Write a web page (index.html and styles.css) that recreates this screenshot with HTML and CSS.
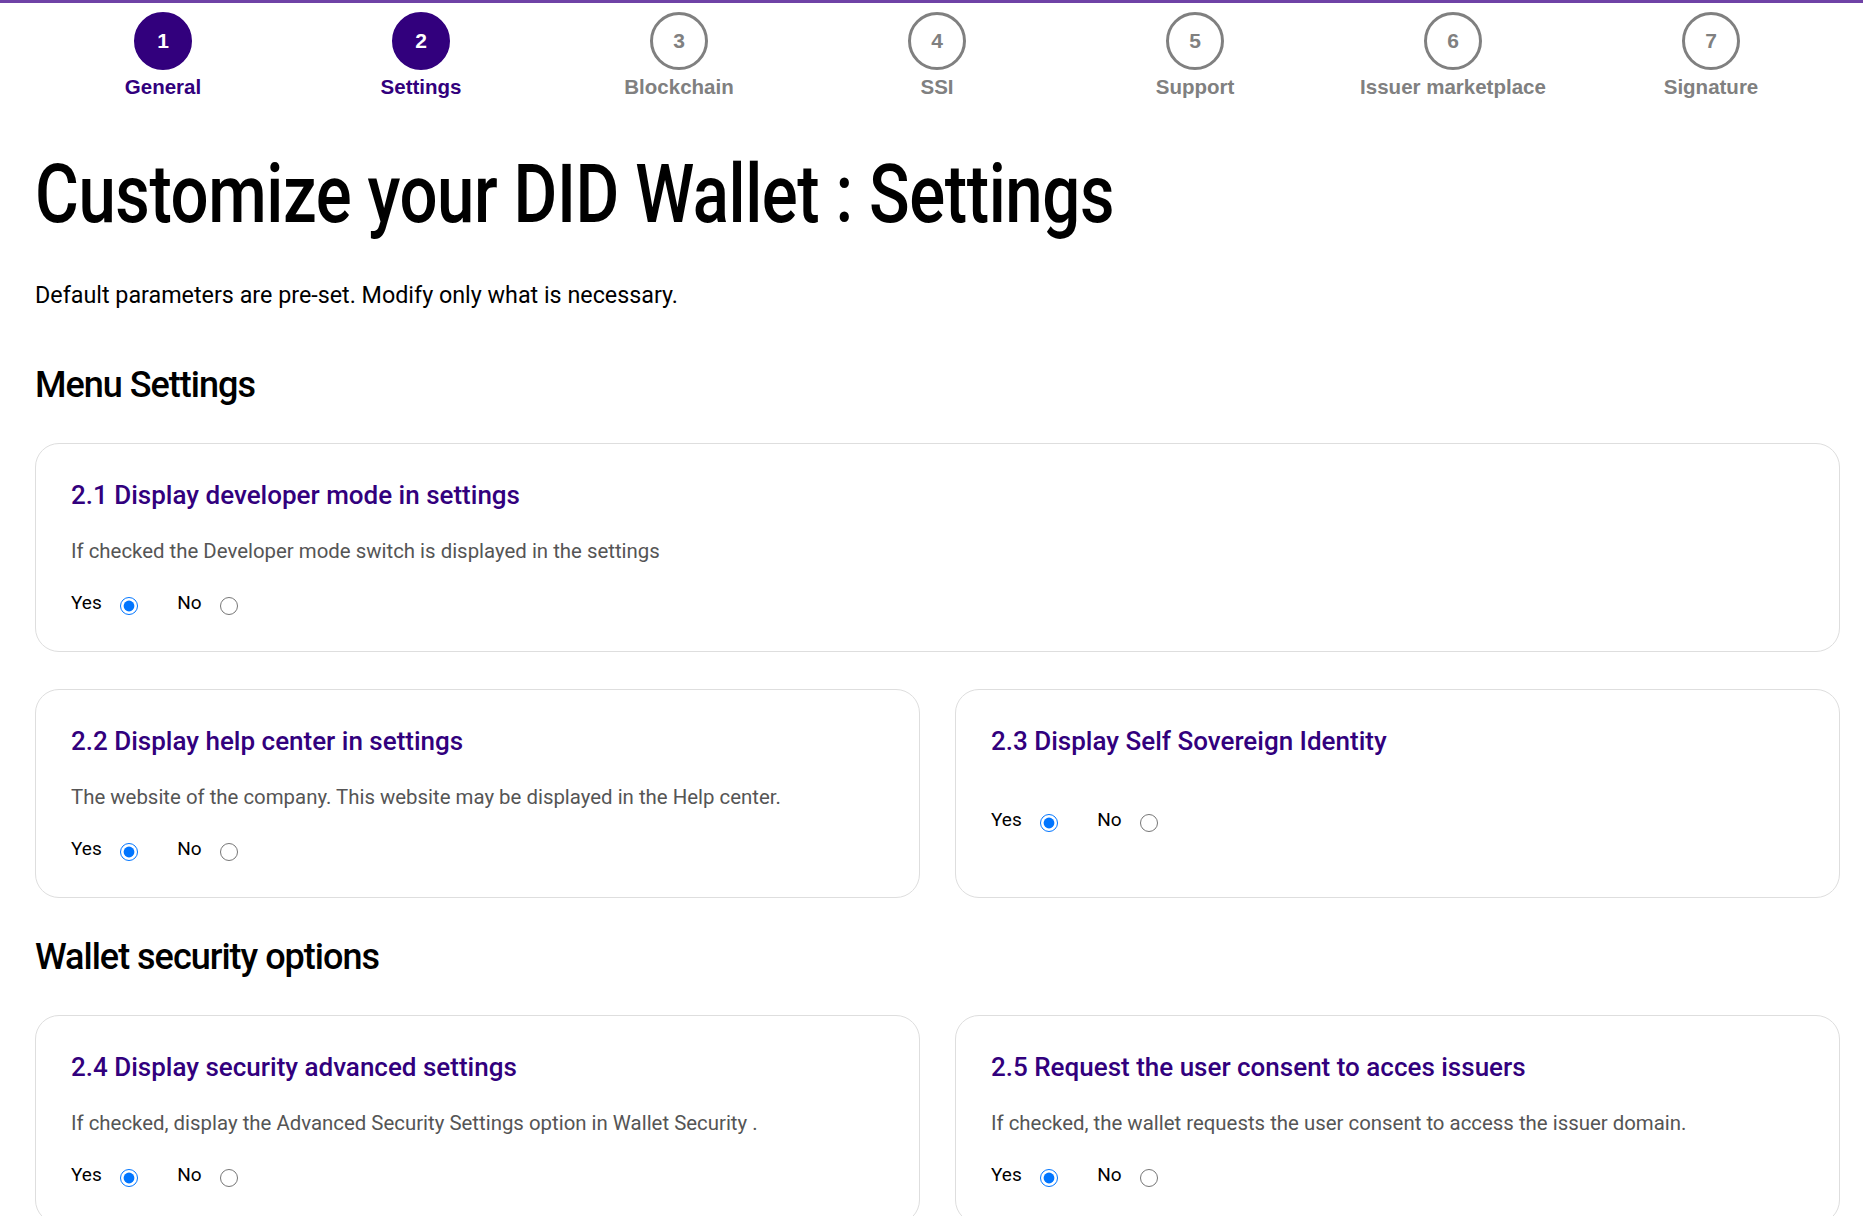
FILE: index.html
```html
<!DOCTYPE html>
<html lang="en">
<head>
<meta charset="utf-8">
<title>Customize your DID Wallet : Settings</title>
<link rel="stylesheet" href="styles.css">
</head>
<body>
<div class="topbar"></div>
<div class="page">
  <ol class="stepper">
    <li class="step done"><span class="dot">1</span><span class="label">General</span></li>
    <li class="step done"><span class="dot">2</span><span class="label">Settings</span></li>
    <li class="step"><span class="dot">3</span><span class="label">Blockchain</span></li>
    <li class="step"><span class="dot">4</span><span class="label">SSI</span></li>
    <li class="step"><span class="dot">5</span><span class="label">Support</span></li>
    <li class="step"><span class="dot">6</span><span class="label">Issuer marketplace</span></li>
    <li class="step"><span class="dot">7</span><span class="label">Signature</span></li>
  </ol>

  <h1 class="title"><span class="title-text">Customize your DID Wallet : Settings</span></h1>
  <p class="lead">Default parameters are pre-set. Modify only what is necessary.</p>

  <h2 class="section">Menu Settings</h2>

  <div class="card">
    <h3 class="card-title">2.1 Display developer mode in settings</h3>
    <p class="card-desc">If checked the Developer mode switch is displayed in the settings</p>
    <div class="choices">
      <label class="opt">Yes<input type="radio" name="q21" checked></label>
      <label class="opt">No<input type="radio" name="q21"></label>
    </div>
  </div>

  <div class="grid">
    <div class="card">
      <h3 class="card-title">2.2 Display help center in settings</h3>
      <p class="card-desc">The website of the company. This website may be displayed in the Help center.</p>
      <div class="choices">
        <label class="opt">Yes<input type="radio" name="q22" checked></label>
        <label class="opt">No<input type="radio" name="q22"></label>
      </div>
    </div>
    <div class="card">
      <h3 class="card-title">2.3 Display Self Sovereign Identity</h3>
      <div class="choices nodesc">
        <label class="opt">Yes<input type="radio" name="q23" checked></label>
        <label class="opt">No<input type="radio" name="q23"></label>
      </div>
    </div>
  </div>

  <h2 class="section second">Wallet security options</h2>

  <div class="grid">
    <div class="card">
      <h3 class="card-title">2.4 Display security advanced settings</h3>
      <p class="card-desc">If checked, display the Advanced Security Settings option in Wallet Security .</p>
      <div class="choices">
        <label class="opt">Yes<input type="radio" name="q24" checked></label>
        <label class="opt">No<input type="radio" name="q24"></label>
      </div>
    </div>
    <div class="card">
      <h3 class="card-title">2.5 Request the user consent to acces issuers</h3>
      <p class="card-desc">If checked, the wallet requests the user consent to access the issuer domain.</p>
      <div class="choices">
        <label class="opt">Yes<input type="radio" name="q25" checked></label>
        <label class="opt">No<input type="radio" name="q25"></label>
      </div>
    </div>
  </div>
</div>
</body>
</html>
```
FILE: styles.css
```css
* { box-sizing: border-box; }
html, body { margin: 0; padding: 0; background: #fff; }
body {
  font-family: Roboto, "Liberation Sans", Arial, sans-serif;
  color: #000;
  overflow: hidden;
}
.topbar { height: 3px; background: #6f42a6; }
.page { padding: 0 23px 0 35px; }

.stepper {
  list-style: none;
  margin: 0 0 0 -1px;
  padding: 9px 0 0;
  display: grid;
  grid-template-columns: repeat(7, 1fr);
}
.step { display: flex; flex-direction: column; align-items: center; }
.dot {
  width: 58px; height: 58px;
  border-radius: 50%;
  border: 3px solid #808080;
  display: flex; align-items: center; justify-content: center;
  font-family: "Liberation Sans", Arial, sans-serif;
  font-weight: 700; font-size: 21px;
  color: #808080;
}
.label {
  margin-top: 5px;
  font-family: "Liberation Sans", Arial, sans-serif;
  font-weight: 700; font-size: 20.5px; line-height: 24px;
  color: #808080;
  white-space: nowrap;
}
.step.done .dot { background: #32007d; border-color: #32007d; color: #fff; }
.step.done .label { color: #32007d; }

.title {
  margin: 47px 0 0;
  font-size: 82px; font-weight: 500; line-height: 96px;
  white-space: nowrap;
}
.title-text {
  display: inline-block;
  letter-spacing: -0.5px;
  transform: scaleX(0.818);
  transform-origin: left center;
}
.lead { margin: 39px 0 0; font-size: 23.3px; line-height: 28px; }
.section {
  margin: 55px 0 0;
  font-size: 36px; font-weight: 500; line-height: 42px;
  letter-spacing: -1px;
}
.section.second { margin-top: 38px; }

.card {
  border: 1px solid #dedede;
  border-radius: 24px;
  padding: 36px 35px 36px;
  background: #fff;
}
.section + .card { margin-top: 37px; }
.card + .grid { margin-top: 37px; }
.section + .grid { margin-top: 37px; }
.grid { display: grid; grid-template-columns: 1fr 1fr; gap: 35px; }

.card-title {
  margin: 0;
  font-size: 26px; font-weight: 500; line-height: 31px;
  color: #32007d;
}
.card-desc {
  margin: 26px 0 0;
  font-size: 20.4px; line-height: 28px;
  color: #555;
}
.choices { display: flex; align-items: center; margin-top: 26px; height: 24px; }
.choices.nodesc { margin-top: 51px; }
.opt {
  display: inline-flex; align-items: center;
  font-size: 19px; line-height: 24px; color: #000;
  margin-right: 39px;
}
.opt input { width: 18px; height: 18px; margin: 5px 0 0 18.5px; }
```
